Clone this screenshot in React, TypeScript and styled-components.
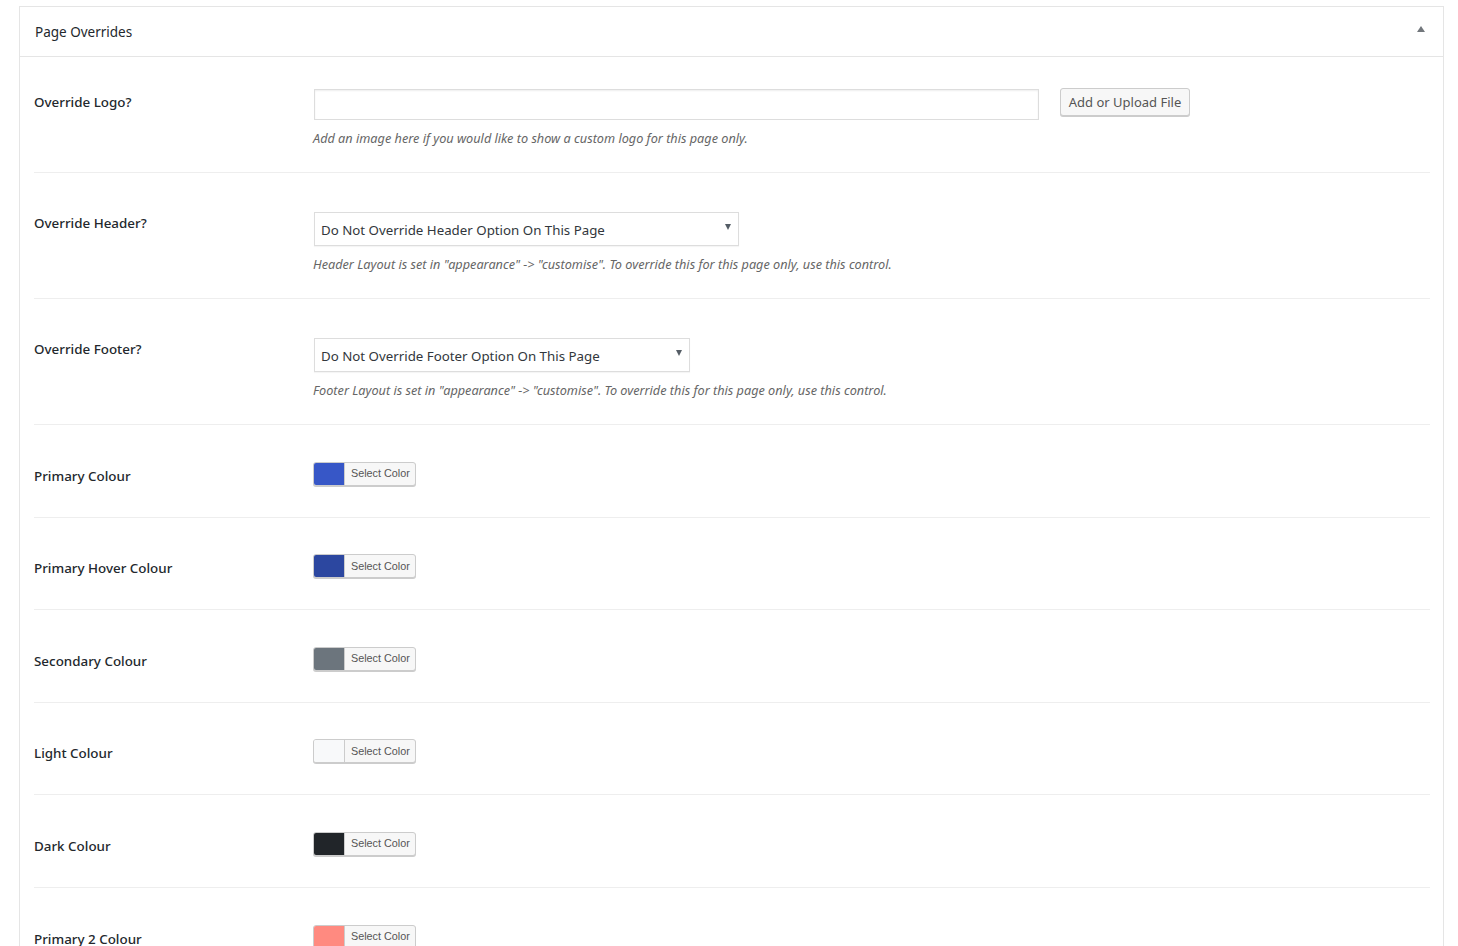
import React from "react";
import styled, { createGlobalStyle } from "styled-components";

const GlobalStyle = createGlobalStyle`
  html, body { margin: 0; padding: 0; background: #ffffff; }
  body {
    font-family: "Noto Sans", "Open Sans", "Liberation Sans", sans-serif;
    color: #23282d;
    -webkit-font-smoothing: antialiased;
  }
  * { box-sizing: border-box; }
`;

const Page = styled.div`
  padding: 6px 14px 0 19px;
  height: 946px;
  overflow: hidden;
`;

const Panel = styled.section`
  border: 1px solid #e5e5e5;
  border-bottom: none;
  background: #fff;
`;

const PanelHeader = styled.header`
  height: 50px;
  display: flex;
  align-items: center;
  justify-content: space-between;
  padding: 0 18px 0 15px;
  border-bottom: 1px solid #e5e5e5;
`;

const PanelTitle = styled.h2`
  margin: 0;
  font-size: 13.5px;
  font-weight: 400;
  color: #23282d;
`;

const ToggleArrow = styled.span`
  width: 0;
  height: 0;
  border-left: 4px solid transparent;
  border-right: 4px solid transparent;
  border-bottom: 6px solid #72777c;
  margin-top: -6px;
`;

const PanelBody = styled.div`
  padding: 0 13px 0 14px;
`;

const Row = styled.div<{ $h: number; $top: number }>`
  display: flex;
  align-items: flex-start;
  height: ${(p) => p.$h + 1}px;
  padding-top: ${(p) => p.$top}px;
  border-bottom: 1px solid #eeeeee;
`;

const Label = styled.div<{ $offset: number }>`
  width: 279px;
  flex: none;
  margin-top: ${(p) => p.$offset}px;
  font-size: 13.4px;
  line-height: 20px;
  font-weight: 500;
  color: #23282d;
`;

const Field = styled.div`
  flex: 1;
  min-width: 0;
`;

const InlineGroup = styled.div`
  display: flex;
  align-items: flex-start;
`;

const TextInput = styled.div`
  width: 725px;
  height: 31px;
  margin-left: 1px;
  border: 1px solid #dddddd;
  box-shadow: inset 0 1px 2px rgba(0, 0, 0, 0.07);
  background: #fff;
`;

const Button = styled.button`
  margin-left: 21px;
  margin-top: -1px;
  height: 28px;
  padding: 0 0 1px;
  width: 130px;
  font-family: inherit;
  font-size: 13px;
  white-space: nowrap;
  color: #555555;
  background: #f7f7f7;
  border: 1px solid #cccccc;
  border-radius: 3px;
  box-shadow: 0 1px 0 #cccccc;
  cursor: pointer;
`;

const Description = styled.p<{ $gap: number }>`
  margin: ${(p) => p.$gap}px 0 0;
  font-size: 12.7px;
  line-height: 16px;
  font-style: italic;
  color: #666666;
`;

const Select = styled.div<{ $w: number }>`
  width: ${(p) => p.$w}px;
  height: 34px;
  margin-left: 1px;
  display: flex;
  align-items: center;
  justify-content: space-between;
  padding: 2px 7px 0 6px;
  border: 1px solid #dddddd;
  box-shadow: 0 1px 1px rgba(0, 0, 0, 0.04);
  background: #fff;
  font-size: 13.3px;
  color: #32373c;
`;

const SelectArrow = styled.span`
  width: 0;
  height: 0;
  border-left: 3.5px solid transparent;
  border-right: 3.5px solid transparent;
  border-top: 6px solid #555d66;
  margin-top: -6px;
`;

const ColorButton = styled.button`
  display: flex;
  align-items: stretch;
  height: 24px;
  width: 103px;
  padding: 0;
  background: #f7f7f7;
  border: 1px solid #cccccc;
  border-radius: 3px;
  box-shadow: 0 1px 0 #cccccc;
  overflow: hidden;
  cursor: pointer;
`;

const Swatch = styled.span<{ $color: string }>`
  width: 31px;
  flex: none;
  background: ${(p) => p.$color};
  border-right: 1px solid #cccccc;
`;

const ColorText = styled.span`
  flex: 1;
  display: flex;
  align-items: center;
  padding-left: 6px;
  padding-bottom: 1px;
  font-family: inherit;
  font-size: 10.8px;
  color: #555555;
  white-space: nowrap;
`;

const colors: { label: string; color: string }[] = [
  { label: "Primary Colour", color: "#3757c7" },
  { label: "Primary Hover Colour", color: "#2c47a0" },
  { label: "Secondary Colour", color: "#6c757d" },
  { label: "Light Colour", color: "#f8f9fa" },
  { label: "Dark Colour", color: "#212529" },
  { label: "Primary 2 Colour", color: "#ff8a80" },
];

export default function App() {
  return (
    <>
      <GlobalStyle />
      <Page>
        <Panel>
          <PanelHeader>
            <PanelTitle>Page Overrides</PanelTitle>
            <ToggleArrow />
          </PanelHeader>
          <PanelBody>
            <Row $h={115} $top={32}>
              <Label $offset={3}>Override Logo?</Label>
              <Field>
                <InlineGroup>
                  <TextInput />
                  <Button>Add or Upload File</Button>
                </InlineGroup>
                <Description $gap={10}>
                  Add an image here if you would like to show a custom logo for this page only.
                </Description>
              </Field>
            </Row>
            <Row $h={125} $top={39}>
              <Label $offset={1}>Override Header?</Label>
              <Field>
                <Select $w={425}>
                  Do Not Override Header Option On This Page
                  <SelectArrow />
                </Select>
                <Description $gap={10}>
                  Header Layout is set in "appearance" -&gt; "customise". To override this for this page only, use this control.
                </Description>
              </Field>
            </Row>
            <Row $h={125} $top={39}>
              <Label $offset={1}>Override Footer?</Label>
              <Field>
                <Select $w={376}>
                  Do Not Override Footer Option On This Page
                  <SelectArrow />
                </Select>
                <Description $gap={10}>
                  Footer Layout is set in "appearance" -&gt; "customise". To override this for this page only, use this control.
                </Description>
              </Field>
            </Row>
            {colors.map((c) => (
              <Row key={c.label} $h={91.6} $top={36.6}>
                <Label $offset={4}>{c.label}</Label>
                <Field>
                  <ColorButton>
                    <Swatch $color={c.color} />
                    <ColorText>Select Color</ColorText>
                  </ColorButton>
                </Field>
              </Row>
            ))}
          </PanelBody>
        </Panel>
      </Page>
    </>
  );
}
